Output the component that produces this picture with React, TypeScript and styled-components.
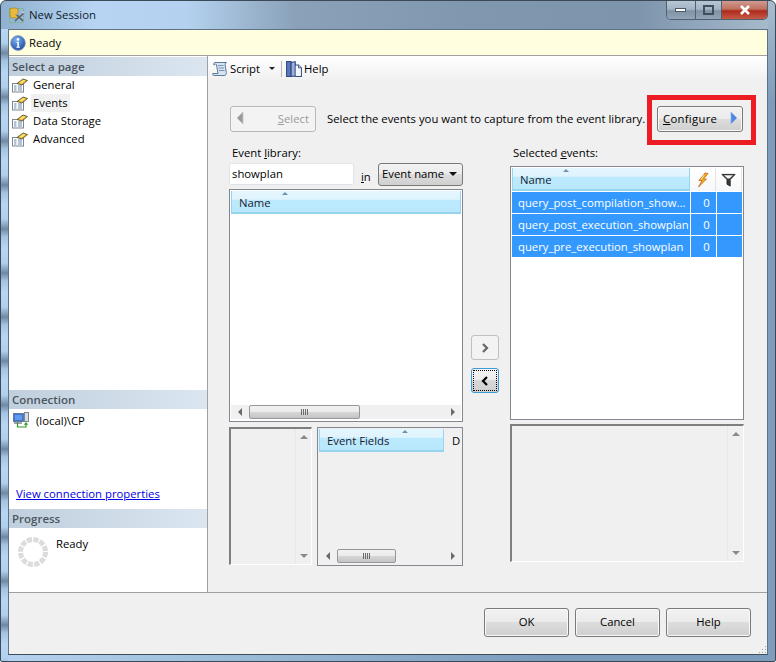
import styled, { createGlobalStyle } from "styled-components";

const GlobalStyle = createGlobalStyle`
  html, body {
    margin: 0;
    padding: 0;
    background: #fff;
  }
  * {
    box-sizing: border-box;
  }
`;

const Frame = styled.div`
  position: relative;
  width: 776px;
  height: 662px;
  display: flex;
  flex-direction: column;
  padding: 0 7px 6px;
  overflow: hidden;
  font-family: "Open Sans", "Liberation Sans", sans-serif;
  font-size: 11.3px;
  color: #000;
  border: 1px solid #3c4a58;
  border-radius: 6px 6px 2px 2px;
  background:
    repeating-linear-gradient(
        180deg,
        #b8d6f3 0,
        #b0cfee 14px,
        #6f89a4 24px,
        #a5c4e3 32px,
        #b8d6f3 44px
      )
      0 28px / 7px 100% no-repeat,
    linear-gradient(#a9bccd 0, #7f9dbb 15%) right 0 / 7px 100% no-repeat,
    linear-gradient(90deg, #b5d3f0 0, #7b9cbc 70%) 0 100% / 100% 6px no-repeat,
    linear-gradient(
      90deg,
      #8fb0cf 0,
      #b7d5f2 12%,
      #b4d2ef 24%,
      #8aa1b9 38%,
      #7f97af 60%,
      #7c94ac 82%,
      #a9bccd 100%
    );
`;

const TitleBar = styled.div`
  height: 28px;
  flex: none;
  display: flex;
  align-items: flex-start;
  padding-left: 1px;
`;

const TitleIcon = styled.svg`
  width: 16px;
  height: 16px;
  margin-top: 6px;
`;

const TitleText = styled.span`
  margin: 5px 0 0 4px;
  font-size: 11.4px;
  line-height: 18px;
  color: #10202e;
`;

const WindowControls = styled.div`
  display: flex;
  margin-left: auto;
  height: 19px;
  border: 1px solid #50606f;
  border-top: 0;
  border-radius: 0 0 5px 5px;
  overflow: hidden;
`;

const ControlButton = styled.div<{ $width: number; $close?: boolean }>`
  width: ${(p) => p.$width}px;
  display: flex;
  align-items: center;
  justify-content: center;
  border-right: ${(p) => (p.$close ? "0" : "1px solid #53606d")};
  background: ${(p) =>
    p.$close
      ? "linear-gradient(#d09a90 0, #c0705f 45%, #ae2a1b 55%, #c65a48 100%)"
      : "linear-gradient(#b8c6d4 0, #a4b5c6 45%, #7f92a6 55%, #93a6b8 100%)"};
`;

const Client = styled.div`
  flex: 1;
  display: flex;
  flex-direction: column;
  min-height: 0;
  background: #f0f0f0;
  border: 1px solid #5e7286;
  border-bottom-color: #3e4c5a;
`;

const InfoBar = styled.div`
  height: 26px;
  flex: none;
  display: flex;
  align-items: center;
  gap: 3px;
  padding-left: 1px;
  background: #ffffdf;
  border-bottom: 1px solid #a0a0a0;
`;

const InfoIcon = styled.svg`
  width: 16px;
  height: 16px;
`;

const Body = styled.div`
  flex: 1;
  display: flex;
  min-height: 0;
`;

const Sidebar = styled.aside`
  width: 199px;
  flex: none;
  display: flex;
  flex-direction: column;
  padding-top: 1px;
  background: #fff;
  border-right: 1px solid #a0a0a0;
`;

const SectionHeader = styled.div`
  height: 19px;
  flex: none;
  display: flex;
  align-items: center;
  padding: 0 3px;
  font-size: 11.5px;
  font-weight: 600;
  color: #4a5560;
  background: linear-gradient(90deg, #c0cfdd 0, #dbe6f1 100%);
`;

const PageList = styled.ul`
  list-style: none;
  margin: 0;
  padding: 0;
  flex: 1;
`;

const PageRow = styled.li`
  height: 18px;
  display: flex;
  align-items: center;
  padding-left: 3px;
`;

const PageIcon = styled.svg`
  width: 16px;
  height: 16px;
  flex: none;
`;

const PageName = styled.span<{ $current?: boolean }>`
  height: 18px;
  line-height: 17px;
  margin-left: 3px;
  padding: 0 2px;
  background: ${(p) => (p.$current ? "#f0f0f0" : "transparent")};
`;

const ConnectionPane = styled.div`
  height: 100px;
  flex: none;
  display: flex;
  flex-direction: column;
  padding: 2px 0 8px 4px;
`;

const ConnectionRow = styled.div`
  display: flex;
  align-items: center;
  gap: 7px;
  height: 18px;
`;

const ConnectionLink = styled.a`
  margin: auto 0 0 3px;
  color: #0000e6;
  text-decoration: underline;
`;

const ProgressPane = styled.div`
  height: 64px;
  flex: none;
  display: flex;
  align-items: flex-start;
  gap: 8px;
  padding: 9px 0 0 9px;
`;

const ProgressText = styled.span`
  line-height: 14px;
`;

const Main = styled.main`
  flex: 1;
  display: flex;
  flex-direction: column;
  min-width: 0;
`;

const Toolbar = styled.div`
  height: 25px;
  flex: none;
  display: flex;
  align-items: center;
  padding-left: 4px;
  background: linear-gradient(#fff 0, #f0f0f0 100%);
`;

const ToolIcon = styled.svg`
  width: 16px;
  height: 16px;
  margin-right: 2px;
`;

const ToolSeparator = styled.div`
  width: 1px;
  height: 16px;
  margin: 0 4px 0 6px;
  background: #b8b8b8;
`;

const Panel = styled.div`
  position: relative;
  flex: 1;
  padding: 25px 24px 0 22px;
`;

const ActionRow = styled.div`
  display: flex;
  align-items: center;
  height: 26px;
  margin-bottom: 14px;
`;

const Hint = styled.span`
  margin-left: 11px;
  padding-bottom: 2px;
  flex: 1;
`;

const Button = styled.button<{ $width?: number; $height?: number; $disabled?: boolean }>`
  width: ${(p) => p.$width ?? 85}px;
  height: ${(p) => p.$height ?? 29}px;
  display: flex;
  align-items: center;
  justify-content: center;
  padding: 0 0 2px;
  font: inherit;
  color: ${(p) => (p.$disabled ? "#9a9a9a" : "#000")};
  border: 1px solid ${(p) => (p.$disabled ? "#b4b8bb" : "#7a7a7a")};
  border-radius: 3px;
  box-shadow: inset 0 0 0 1px ${(p) => (p.$disabled ? "#f6f6f6" : "#f8f8f8")};
  background: ${(p) =>
    p.$disabled
      ? "#f3f3f3"
      : "linear-gradient(#f2f2f2 0, #ebebeb 48%, #dddddd 50%, #cfcfcf 100%)"};
`;

const PagerButton = styled(Button)<{ $padRight: number }>`
  justify-content: space-between;
  padding: 0 ${(p) => p.$padRight}px 2px 5px;
`;

const ConfigureLabel = styled.span`
  letter-spacing: 0.3px;
`;

const AccessKey = styled.span`
  text-decoration: underline;
`;

const Columns = styled.div`
  display: flex;
  align-items: flex-start;
  margin-left: -1px;
`;

const Column = styled.div`
  width: 234px;
  flex: none;
`;

const FieldLabel = styled.div<{ $height: number }>`
  height: ${(p) => p.$height}px;
  line-height: 14px;
  padding-left: 3px;
`;

const SearchRow = styled.div`
  display: flex;
  align-items: center;
  height: 22px;
  margin-bottom: 4px;
`;

const SearchBox = styled.div`
  width: 125px;
  height: 22px;
  line-height: 19px;
  padding-left: 2px;
  background: #fff;
  border: 1px solid #e2e3ea;
  border-radius: 2px;
`;

const InLabel = styled.span`
  width: 24px;
  padding: 5px 0 0 7px;
`;

const Dropdown = styled.div`
  width: 85px;
  height: 23px;
  display: flex;
  align-items: center;
  justify-content: space-between;
  overflow: hidden;
  padding: 0 5px 1px 3px;
  white-space: nowrap;
  border: 1px solid #7a7a7a;
  border-radius: 3px;
  background: linear-gradient(#f2f2f2 0, #ebebeb 48%, #dddddd 50%, #cfcfcf 100%);
`;

const ListBox = styled.div<{ $height: number }>`
  height: ${(p) => p.$height}px;
  display: flex;
  flex-direction: column;
  padding: 1px;
  background: #fff;
  border: 1px solid #828790;
`;

const HeaderRow = styled.div`
  display: flex;
  height: 23px;
  margin-bottom: 1px;
  flex: none;
`;

const HeaderCell = styled.div<{ $width?: number }>`
  position: relative;
  flex: ${(p) => (p.$width ? `0 0 ${p.$width}px` : "1")};
  display: flex;
  align-items: flex-end;
  padding: 0 0 2px 7px;
  line-height: 15px;
  color: #1a1a2e;
  border: 1px solid #97d4ee;
  border-width: 0 1px 2px 1px;
  background: linear-gradient(#e4f6fe 0, #e0f4fd 40%, #bce9fd 42%, #b9e8fd 100%);
`;

const SortArrow = styled.span<{ $left: number }>`
  position: absolute;
  top: 1px;
  left: ${(p) => p.$left}px;
  width: 0;
  height: 0;
  border: 3.5px solid transparent;
  border-top: 0;
  border-bottom: 3px solid #6b93ad;
`;

const IconCell = styled.div`
  flex: 0 0 26px;
  display: flex;
  align-items: center;
  justify-content: center;
  border-right: 1px solid #e4e4e4;
  background: linear-gradient(#fff 0, #f7f8f9 100%);
`;

const EventRow = styled.div`
  display: flex;
  height: 22px;
  flex: none;
  color: #fff;
  line-height: 21px;
`;

const EventName = styled.div`
  flex: 0 0 178px;
  padding-left: 6px;
  overflow: hidden;
  white-space: nowrap;
  background: #3399ff;
  border-bottom: 1px solid #fff;
`;

const EventCount = styled.div`
  flex: 0 0 26px;
  text-align: center;
  padding-left: 6px;
  background: #3399ff;
  border-left: 1px solid #fff;
  border-bottom: 1px solid #fff;
`;

const ListBody = styled.div`
  flex: 1;
`;

const HScroll = styled.div`
  height: 14px;
  flex: none;
  margin-bottom: 1px;
  display: flex;
  align-items: center;
  background: #f0f0f0;
`;

const ScrollEnd = styled.div<{ $basis: number }>`
  flex: 0 0 ${(p) => p.$basis}px;
  display: flex;
  align-items: center;
  justify-content: center;
`;

const ScrollTrack = styled.div`
  flex: 1;
  display: flex;
  height: 100%;
`;

const ScrollThumb = styled.div<{ $width: number }>`
  width: ${(p) => p.$width}px;
  height: 100%;
  display: flex;
  align-items: center;
  justify-content: center;
  gap: 1px;
  border: 1px solid #979797;
  border-radius: 2px;
  background: linear-gradient(#f1f1f1 0, #ebebeb 48%, #d6d6d6 52%, #c4c4c4 100%);
`;

const Grip = styled.i`
  width: 1px;
  height: 6px;
  background: #6a6a6a;
`;

const Arrow = styled.span<{
  $dir: "up" | "down" | "left" | "right";
  $color?: string;
  $size?: number;
  $gap?: number;
}>`
  flex: none;
  width: 0;
  height: 0;
  margin-left: ${(p) => p.$gap ?? 0}px;
  border: ${(p) => p.$size ?? 4}px solid transparent;
  ${(p) => {
    const c = p.$color ?? "#6a6a6a";
    const s = p.$size ?? 4;
    if (p.$dir === "up") return `border-top: 0; border-bottom: ${s}px solid ${c};`;
    if (p.$dir === "down") return `border-bottom: 0; border-top: ${s}px solid ${c};`;
    if (p.$dir === "left") return `border-left: 0; border-right: ${s}px solid ${c};`;
    return `border-right: 0; border-left: ${s}px solid ${c};`;
  }}
`;

const BottomRow = styled.div`
  display: flex;
  gap: 5px;
  margin-top: 5px;
`;

const InsetBox = styled.div<{ $width: number; $height: number }>`
  width: ${(p) => p.$width}px;
  height: ${(p) => p.$height}px;
  display: flex;
  justify-content: flex-end;
  border: 1px solid;
  border-width: 2px 1px 1px 2px;
  border-color: #7f7f7f #fff #fff #7f7f7f;
`;

const VScroll = styled.div`
  width: 16px;
  display: flex;
  flex-direction: column;
  align-items: center;
  justify-content: space-between;
  padding: 6px 0;
  border-left: 1px solid #e8e8e8;
`;

const FieldsBox = styled.div`
  width: 146px;
  height: 139px;
  display: flex;
  flex-direction: column;
  padding: 1px;
  border: 1px solid #828790;
`;

const DetailCell = styled.div`
  flex: 1;
  padding: 4px 0 0 8px;
  overflow: hidden;
  line-height: 15px;
`;

const MoveButtons = styled.div`
  flex: 0 0 47px;
  display: flex;
  flex-direction: column;
  align-items: flex-start;
  gap: 8px;
  padding: 189px 0 0 8px;
`;

const MoveButton = styled.button<{ $focused?: boolean }>`
  width: 28px;
  height: 25px;
  display: flex;
  align-items: center;
  justify-content: center;
  padding: 0;
  border: 1px solid ${(p) => (p.$focused ? "#3c9ad4" : "#c0c0c0")};
  border-radius: 3px;
  outline: ${(p) => (p.$focused ? "1px dotted #000" : "none")};
  outline-offset: -3px;
  background: ${(p) =>
    p.$focused
      ? "linear-gradient(#f4f4f4 0, #ececec 48%, #d8d8d8 50%, #cfcfcf 100%)"
      : "#f3f3f3"};
`;

const DetailsSlot = styled.div`
  margin-top: 4px;
`;

const Callout = styled.div`
  position: absolute;
  top: 14px;
  right: 11px;
  width: 109px;
  height: 50px;
  border: 5px solid #ed1c24;
`;

const Footer = styled.footer`
  height: 62px;
  flex: none;
  display: flex;
  align-items: flex-start;
  justify-content: flex-end;
  gap: 6px;
  padding: 15px 16px 0 0;
  border-top: 1px solid #a0a0a0;
  background: #f0f0f0;
`;

const Grabber = styled.svg`
  position: absolute;
  right: 8px;
  bottom: 7px;
  width: 10px;
  height: 10px;
`;

function PageGlyph() {
  return (
    <PageIcon viewBox="0 0 16 16">
      <rect x=".5" y="6.5" width="11" height="8.5" fill="#fff" stroke="#7c8590" />
      <path d="M2 9h2.5M2 11h2.5M2 13h2.5M6 9h4M6 11h4M6 13h4" stroke="#6a87a8" />
      <path d="M5 6.500 11 2l4.500 1.500L10 8z" fill="#e3b72c" stroke="#4e4628" strokeWidth=".8" />
      <path d="M7.500 5.500 11.500 3l2 .7-4 2.800z" fill="#f7e27c" />
    </PageIcon>
  );
}

const Icons = {
  app: (
    <TitleIcon viewBox="0 0 16 16">
      <rect x=".5" y="1.5" width="14" height="14" fill="none" stroke="#6fb35a" strokeDasharray="1.5 1.5" />
      <path d="M1 2.500C1 .5 9 .5 9 2.500v7C9 11.500 1 11.500 1 9.500z" fill="#e8b93a" stroke="#9a7a22" strokeWidth=".6" />
      <path d="M6 14 15 6M7 7l7 7" stroke="#53606b" strokeWidth="1.6" />
      <path d="M7 6.500 8.500 8M13 5l2 1" stroke="#d9dde0" strokeWidth="1" />
    </TitleIcon>
  ),
  info: (
    <InfoIcon viewBox="0 0 16 16">
      <defs>
        <radialGradient id="infoFill" cx="40%" cy="30%" r="75%">
          <stop offset="0" stopColor="#7fb0f0" />
          <stop offset="1" stopColor="#1a48a8" />
        </radialGradient>
      </defs>
      <circle cx="8" cy="8" r="7.4" fill="url(#infoFill)" stroke="#8f9db5" strokeWidth=".8" />
      <circle cx="8" cy="4.4" r="1.3" fill="#fff" />
      <path d="M6.600 6.800h2.300v5h1v.9H6.400v-.9h1v-4.100h-.8z" fill="#fff" />
    </InfoIcon>
  ),
  script: (
    <ToolIcon viewBox="0 0 16 16">
      <path
        d="M3 1.500h11.500c-1.500.5-1.500 2-1.200 3.500l1 6.500c.3 1.800-.8 3-2.300 3H2c-1 0-1.600-1-1.300-2h5.300L4.500 4C4.300 3 3.500 2.500 3 3.500 2.500 4 2 3.500 1.500 3.500 1.500 2.500 2 1.500 3 1.500z"
        fill="#d5e3f2"
        stroke="#4f6d92"
        strokeWidth=".9"
      />
      <path d="M6 4.500h5.500M6.500 7h5.500M7 9.500h5.500" stroke="#5f7ea3" strokeWidth=".8" />
    </ToolIcon>
  ),
  help: (
    <ToolIcon viewBox="1 1 14 14">
      <path d="M1.500 1.500h4v13h-4z" fill="#5b78b8" stroke="#2f4680" strokeWidth=".9" />
      <path d="M5.500 2.500 9 1.500l1.500 12.500-5 .5z" fill="#9ab0de" stroke="#2f4680" strokeWidth=".9" />
      <path d="M9 4.500h3l2.500 2.500v7.500H9z" fill="#f4f6fb" stroke="#39507f" strokeWidth=".9" />
      <path d="M12 4.500V7h2.500" fill="#cfd8ea" stroke="#39507f" strokeWidth=".8" />
    </ToolIcon>
  ),
  connection: (
    <PageIcon viewBox="0 0 16 16">
      <rect x=".5" y="1.5" width="10" height="8" fill="#3d74d8" stroke="#6c7d92" />
      <rect x="2" y="3" width="7" height="5" fill="#5d9cf2" />
      <rect x="11.500" y=".5" width="4" height="9" fill="#d6dde6" stroke="#7b8794" />
      <path d="M1 11h8" stroke="#7b8794" strokeWidth="1.5" />
      <path d="M4.500 10.500v4.500h8.500v-3" fill="none" stroke="#2f9a2a" strokeWidth="1.2" />
      <path d="M10.800 12.800 13 10l2.200 2.800z" fill="#2f9a2a" />
    </PageIcon>
  ),
  bolt: (
    <svg width="16" height="16" viewBox="0 0 16 16">
      <path d="M10 1 4 8.500h3L3.500 15l8-8H8.500L13 1.500z" fill="#f2b01e" stroke="#c8601a" strokeWidth=".8" />
      <path d="M9 3 6 7.500" stroke="#fbe8a0" />
    </svg>
  ),
  funnel: (
    <svg width="15" height="14" viewBox="0 0 16 15">
      <path d="M1 1.500h14L9.800 7v7l-3.400-2V7z" fill="#3a3a3a" stroke="#222" />
      <path d="M3.200 2.500h9.600L9 6H7z" fill="#f4f4f4" />
    </svg>
  ),
  configure: (
    <svg width="8" height="14" viewBox="0 0 8 14">
      <path d="M1 1 7 7 1 13z" fill="#4f86e0" stroke="#8fb4ee" strokeWidth=".8" />
    </svg>
  ),
  select: (
    <svg width="8" height="14" viewBox="0 0 8 14">
      <path d="M7 1 1 7l6 6z" fill="#9a9a9a" stroke="#c4c4c4" strokeWidth=".8" />
    </svg>
  ),
  spinner: (
    <svg width="30" height="30" viewBox="0 0 30 30">
      <circle cx="15" cy="15" r="12.5" fill="none" stroke="#dcdcdc" strokeWidth="5" strokeDasharray="5.2 1.34" />
    </svg>
  ),
};

function Chevron({ dir, color }: { dir: "left" | "right"; color: string }) {
  return (
    <svg width="8" height="10" viewBox="0 0 8 10">
      <path
        d={dir === "right" ? "M2 1l4 4-4 4" : "M6 1 2 5l4 4"}
        fill="none"
        stroke={color}
        strokeWidth="2.2"
      />
    </svg>
  );
}

function Scrollbar({ thumb }: { thumb: number }) {
  return (
    <HScroll>
      <ScrollEnd $basis={18}>
        <Arrow $dir="left" />
      </ScrollEnd>
      <ScrollTrack>
        <ScrollThumb $width={thumb}>
          <Grip />
          <Grip />
          <Grip />
          <Grip />
        </ScrollThumb>
      </ScrollTrack>
      <ScrollEnd $basis={16}>
        <Arrow $dir="right" />
      </ScrollEnd>
    </HScroll>
  );
}

const pages = ["General", "Events", "Data Storage", "Advanced"];
const events = [
  "query_post_compilation_show...",
  "query_post_execution_showplan",
  "query_pre_execution_showplan",
];

export default function App() {
  return (
    <>
      <GlobalStyle />
      <Frame>
        <TitleBar>
          {Icons.app}
          <TitleText>New Session</TitleText>
          <WindowControls>
            <ControlButton $width={29}>
              <svg width="12" height="6"><rect x=".5" y="1.5" width="10" height="3" fill="#fff" stroke="#4a5a68" /></svg>
            </ControlButton>
            <ControlButton $width={26}>
              <svg width="12" height="10"><rect x="1" y="1" width="9" height="8" fill="none" stroke="#3f4f5e" strokeWidth="2" /></svg>
            </ControlButton>
            <ControlButton $width={45} $close>
              <svg width="12" height="10"><path d="M2 1l8 8M10 1 2 9" stroke="#fff" strokeWidth="2.6" /></svg>
            </ControlButton>
          </WindowControls>
        </TitleBar>
        <Client>
          <InfoBar>
            {Icons.info}
            Ready
          </InfoBar>
          <Body>
            <Sidebar>
              <SectionHeader>Select a page</SectionHeader>
              <PageList>
                {pages.map((page) => (
                  <PageRow key={page}>
                    <PageGlyph />
                    <PageName $current={page === "Events"}>{page}</PageName>
                  </PageRow>
                ))}
              </PageList>
              <SectionHeader>Connection</SectionHeader>
              <ConnectionPane>
                <ConnectionRow>
                  {Icons.connection}
                  (local)\CP
                </ConnectionRow>
                <ConnectionLink href="#">View connection properties</ConnectionLink>
              </ConnectionPane>
              <SectionHeader>Progress</SectionHeader>
              <ProgressPane>
                {Icons.spinner}
                <ProgressText>Ready</ProgressText>
              </ProgressPane>
            </Sidebar>
            <Main>
              <Toolbar>
                {Icons.script}
                Script
                <Arrow $dir="down" $color="#222" $size={3} $gap={9} />
                <ToolSeparator />
                {Icons.help}
                Help
              </Toolbar>
              <Panel>
                <ActionRow>
                  <PagerButton $width={86} $height={26} $padRight={6} $disabled>
                    {Icons.select}
                    <span>
                      <AccessKey>S</AccessKey>elect
                    </span>
                  </PagerButton>
                  <Hint>Select the events you want to capture from the event library.</Hint>
                  <PagerButton $width={86} $height={26} $padRight={4}>
                    <ConfigureLabel>
                      <AccessKey>C</AccessKey>onfigure
                    </ConfigureLabel>
                    {Icons.configure}
                  </PagerButton>
                </ActionRow>
                <Callout />
                <Columns>
                  <Column>
                    <FieldLabel $height={17}>
                      Event <AccessKey>l</AccessKey>ibrary:
                    </FieldLabel>
                    <SearchRow>
                      <SearchBox>showplan</SearchBox>
                      <InLabel>
                        <AccessKey>i</AccessKey>n
                      </InLabel>
                      <Dropdown>
                        Event name
                        <Arrow $dir="down" $color="#111" />
                      </Dropdown>
                    </SearchRow>
                    <ListBox $height={233}>
                      <HeaderRow>
                        <HeaderCell>
                          Name
                          <SortArrow $left={50} />
                        </HeaderCell>
                      </HeaderRow>
                      <ListBody />
                      <Scrollbar thumb={111} />
                    </ListBox>
                    <BottomRow>
                      <InsetBox $width={83} $height={138}>
                        <VScroll>
                          <Arrow $dir="up" $color="#8a8a8a" />
                          <Arrow $dir="down" $color="#8a8a8a" />
                        </VScroll>
                      </InsetBox>
                      <FieldsBox>
                        <HeaderRow>
                          <HeaderCell $width={125}>
                            Event Fields
                            <SortArrow $left={82} />
                          </HeaderCell>
                          <DetailCell>D</DetailCell>
                        </HeaderRow>
                        <ListBody />
                        <Scrollbar thumb={59} />
                      </FieldsBox>
                    </BottomRow>
                  </Column>
                  <MoveButtons>
                    <MoveButton>
                      <Chevron dir="right" color="#666" />
                    </MoveButton>
                    <MoveButton $focused>
                      <Chevron dir="left" color="#000" />
                    </MoveButton>
                  </MoveButtons>
                  <Column>
                    <FieldLabel $height={20}>
                      Selected <AccessKey>e</AccessKey>vents:
                    </FieldLabel>
                    <ListBox $height={254}>
                      <HeaderRow>
                        <HeaderCell $width={178}>
                          Name
                          <SortArrow $left={50} />
                        </HeaderCell>
                        <IconCell>{Icons.bolt}</IconCell>
                        <IconCell>{Icons.funnel}</IconCell>
                      </HeaderRow>
                      {events.map((name) => (
                        <EventRow key={name}>
                          <EventName>{name}</EventName>
                          <EventCount>0</EventCount>
                          <EventCount />
                        </EventRow>
                      ))}
                    </ListBox>
                    <DetailsSlot>
                      <InsetBox $width={234} $height={138}>
                        <VScroll>
                          <Arrow $dir="up" $color="#8a8a8a" />
                          <Arrow $dir="down" $color="#8a8a8a" />
                        </VScroll>
                      </InsetBox>
                    </DetailsSlot>
                  </Column>
                </Columns>
              </Panel>
            </Main>
          </Body>
          <Footer>
            <Button>OK</Button>
            <Button>Cancel</Button>
            <Button>Help</Button>
          </Footer>
        </Client>
        <Grabber viewBox="0 0 10 10">
          <path d="M8 2h1v1H8zM5 5h1v1H5zM8 5h1v1H8zM2 8h1v1H2zM5 8h1v1H5zM8 8h1v1H8z" fill="#a0a0a0" />
        </Grabber>
      </Frame>
    </>
  );
}
